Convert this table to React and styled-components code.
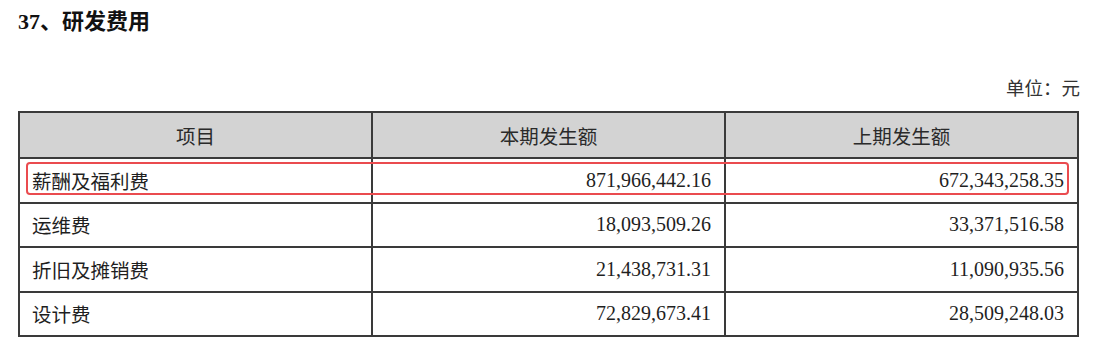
import React from 'react';
import styled, { createGlobalStyle } from 'styled-components';

const GlobalStyle = createGlobalStyle`
  body {
    margin: 0;
    background: #fff;
    font-family: "Liberation Serif", "Noto Sans CJK SC", serif;
    color: #222;
  }
`;

const Page = styled.div`
  width: 1095px;
  height: 346px;
  padding: 7px 15px 0 18px;
  box-sizing: border-box;
`;

const Title = styled.div`
  font-size: 22px;
  font-weight: bold;
  line-height: 30px;
  color: #111;
`;

const Unit = styled.div`
  margin-top: 40px;
  font-size: 18.5px;
  line-height: 24px;
  text-align: right;
  color: #333;
`;

const TableWrap = styled.div`
  position: relative;
  width: 1061px;
  margin-top: 10px;
`;

const Table = styled.table`
  width: 100%;
  border-collapse: collapse;
  table-layout: fixed;
  border: 2px solid #3a3a3a;
`;

const HeadCell = styled.th`
  height: 44px;
  padding: 0;
  background: #d3d3d3;
  border: 2px solid #3a3a3a;
  font-weight: normal;
  font-size: 19.5px;
  color: #2a2a2a;
  text-align: center;
`;

const Cell = styled.td`
  height: 42.5px;
  padding: 0 ${({ num }) => (num ? '13px' : '0')} 0 ${({ num }) => (num ? '0' : '12px')};
  border: 2px solid #3a3a3a;
  font-size: ${({ num }) => (num ? '20px' : '19.5px')};
  text-align: ${({ num }) => (num ? 'right' : 'left')};
  color: #1f1f1f;
`;

const Highlight = styled.div`
  position: absolute;
  left: 8px;
  top: 51px;
  width: 1043px;
  height: 33px;
  box-sizing: border-box;
  border: 2px solid #ea4b4f;
  border-radius: 4px;
  pointer-events: none;
`;

const rows = [
  ['薪酬及福利费', '871,966,442.16', '672,343,258.35'],
  ['运维费', '18,093,509.26', '33,371,516.58'],
  ['折旧及摊销费', '21,438,731.31', '11,090,935.56'],
  ['设计费', '72,829,673.41', '28,509,248.03'],
];

export default function App() {
  return (
    <Page>
      <GlobalStyle />
      <Title>37、研发费用</Title>
      <Unit>单位：元</Unit>
      <TableWrap>
        <Table>
          <thead>
            <tr>
              <HeadCell>项目</HeadCell>
              <HeadCell>本期发生额</HeadCell>
              <HeadCell>上期发生额</HeadCell>
            </tr>
          </thead>
          <tbody>
            {rows.map(([name, cur, prev]) => (
              <tr key={name}>
                <Cell>{name}</Cell>
                <Cell num>{cur}</Cell>
                <Cell num>{prev}</Cell>
              </tr>
            ))}
          </tbody>
        </Table>
        <Highlight />
      </TableWrap>
    </Page>
  );
}
